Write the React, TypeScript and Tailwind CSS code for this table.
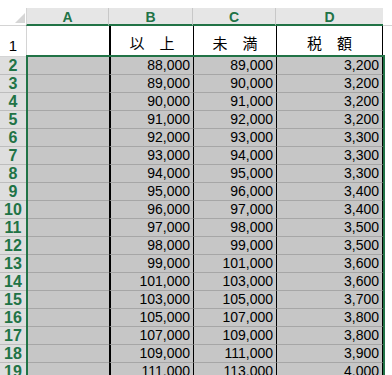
import React from 'react';

const rows: [number, string, string, string][] = [
  [2, '88,000', '89,000', '3,200'],
  [3, '89,000', '90,000', '3,200'],
  [4, '90,000', '91,000', '3,200'],
  [5, '91,000', '92,000', '3,200'],
  [6, '92,000', '93,000', '3,300'],
  [7, '93,000', '94,000', '3,300'],
  [8, '94,000', '95,000', '3,300'],
  [9, '95,000', '96,000', '3,400'],
  [10, '96,000', '97,000', '3,400'],
  [11, '97,000', '98,000', '3,500'],
  [12, '98,000', '99,000', '3,500'],
  [13, '99,000', '101,000', '3,600'],
  [14, '101,000', '103,000', '3,600'],
  [15, '103,000', '105,000', '3,700'],
  [16, '105,000', '107,000', '3,800'],
  [17, '107,000', '109,000', '3,800'],
  [18, '109,000', '111,000', '3,900'],
  [19, '111,000', '113,000', '4,000'],
];

const headCell =
  'flex h-[18px] items-center justify-center pt-[2px] bg-[#e6e6e6] border-b-2 border-b-[#217346] text-[14px] font-bold text-[#217346]';
const jpCell =
  "flex h-full items-end justify-center pb-[3px] text-[15px] leading-[18px] text-black font-['Noto_Sans_CJK_JP',sans-serif]";
const numCell =
  'flex h-full items-center justify-end pr-[3px] border-b border-b-[#a6a6a6] text-[14px] text-black';

export default function App() {
  return (
    <div className="flex h-[375px] w-[392px] items-start overflow-hidden bg-white font-['Liberation_Sans',Arial,sans-serif]">
      {/* row headers */}
      <div className="flex w-[26px] shrink-0 flex-col">
        <div className="relative h-[26px] shrink-0 border-b border-[#d4d4d4] bg-white">
          <svg className="absolute left-[15px] top-[13px]" width="10" height="10" viewBox="0 0 10 10">
            <polygon points="10,0 10,10 0,10" fill="#d6d6d6" />
          </svg>
        </div>
        <div className="flex h-[31px] shrink-0 items-end justify-center border-b border-[#d4d4d4] pb-[1px] text-[15px] leading-[18px] text-black">
          1
        </div>
        {rows.map((r) => (
          <div
            key={r[0]}
            className="flex h-[18px] shrink-0 items-center justify-center border-b border-[#bdbdbd] bg-[#dedede] text-[16px] font-bold leading-none text-[#217346]"
          >
            {r[0]}
          </div>
        ))}
      </div>

      {/* grid */}
      <div className="flex flex-1 flex-col">
        <div className="flex h-[26px] shrink-0 items-end">
          <div className={`${headCell} w-[83px] border-l border-l-[#d4d4d4] border-r border-r-[#c8c8c8]`}>A</div>
          <div className={`${headCell} w-[84px] border-r border-r-[#c8c8c8]`}>B</div>
          <div className={`${headCell} w-[83px] border-r border-r-[#c8c8c8]`}>C</div>
          <div className={`${headCell} w-[107px]`}>D</div>
          <div className="h-[26px] flex-1 border-b border-[#d4d4d4]" />
        </div>

        <div className="flex h-[29px] shrink-0">
          <div className="h-full w-[83px] border-l border-[#d4d4d4]" />
          <div className={`${jpCell} w-[84px] border-l-2 border-black`}>以　上</div>
          <div className={`${jpCell} w-[83px] border-l border-black`}>未　満</div>
          <div className={`${jpCell} w-[107px] border-x border-black`}>税　額</div>
        </div>

        <div className="flex w-[359px] shrink-0 flex-col border-2 border-[#217346]">
          {rows.map((r) => (
            <div key={r[0]} className="flex h-[18px] shrink-0 bg-[#c6c6c6]">
              <div className="h-full w-[81px] border-b border-[#a6a6a6]" />
              <div className={`${numCell} w-[84px] border-l-2 border-l-black`}>{r[1]}</div>
              <div className={`${numCell} w-[83px] border-l border-l-black`}>{r[2]}</div>
              <div className={`${numCell} w-[107px] border-x border-x-black`}>{r[3]}</div>
            </div>
          ))}
        </div>
      </div>
    </div>
  );
}
